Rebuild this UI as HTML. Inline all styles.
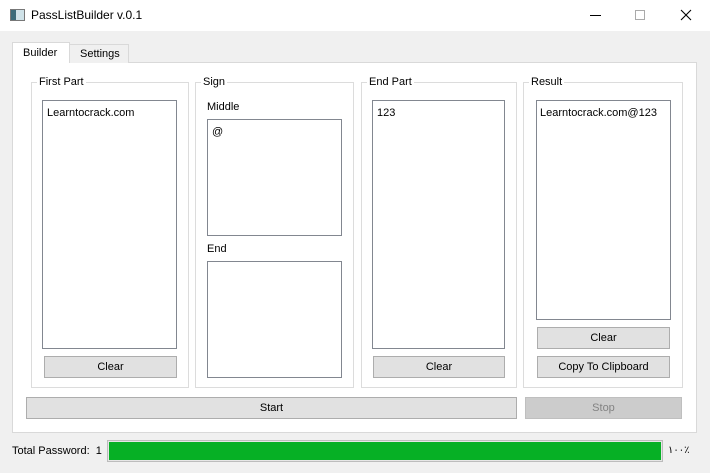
<!DOCTYPE html><html><head><style>
*{margin:0;padding:0;box-sizing:border-box}
body{width:710px;height:473px;background:#f0f0f0;font-family:"Liberation Sans",sans-serif;font-size:11px;color:#000;position:relative;overflow:hidden}
.a{position:absolute}
.box{position:absolute;background:#fff;border:1px solid #828790}
.grp{position:absolute;border:1px solid #dcdcdc}
.grp span{position:absolute;top:-7px;left:5px;background:#fff;padding:0 2px}
.btn{position:absolute;background:#e1e1e1;border:1px solid #adadad;text-align:center;line-height:20px}
</style></head><body>
<div class="a" style="left:0;top:0;width:710px;height:31px;background:#fff"></div>
<div class="a" style="left:10px;top:9px;width:15px;height:12px;border:1px solid #777;background:linear-gradient(90deg,#3b6b7a 0 40%,#cfe2e8 40%)"></div>
<div class="a" style="left:31px;top:8px;font-size:12px">PassListBuilder v.0.1</div>
<div class="a" style="left:590px;top:15px;width:11px;height:1px;background:#000"></div>
<div class="a" style="left:635px;top:10px;width:10px;height:10px;border:1px solid #aaa"></div>
<svg class="a" style="left:680px;top:9px" width="12" height="12"><path d="M1 1L11 11M11 1L1 11" stroke="#000" stroke-width="1.1"/></svg>
<div class="a" style="left:12px;top:62px;width:685px;height:371px;background:#fff;border:1px solid #d9d9d9"></div>
<div class="a" style="left:69px;top:44px;width:60px;height:19px;background:#f0f0f0;border:1px solid #d9d9d9;border-bottom:none;padding-left:10px;line-height:18px">Settings</div>
<div class="a" style="left:12px;top:42px;width:58px;height:21px;background:#fff;border:1px solid #d9d9d9;border-bottom:none;padding-left:10px;line-height:20px">Builder</div>
<div class="grp" style="left:31px;top:82px;width:158px;height:306px"><span>First Part</span></div>
<div class="grp" style="left:195px;top:82px;width:159px;height:306px"><span>Sign</span></div>
<div class="grp" style="left:361px;top:82px;width:156px;height:306px"><span>End Part</span></div>
<div class="grp" style="left:523px;top:82px;width:160px;height:306px"><span>Result</span></div>
<div class="box" style="left:42px;top:100px;width:135px;height:249px;padding:6px 4px">Learntocrack.com</div>
<div class="btn" style="left:44px;top:356px;width:133px;height:22px">Clear</div>
<div class="a" style="left:207px;top:101px">Middle</div>
<div class="box" style="left:207px;top:119px;width:135px;height:117px;padding:6px 4px">@</div>
<div class="a" style="left:207px;top:243px">End</div>
<div class="box" style="left:207px;top:261px;width:135px;height:117px"></div>
<div class="box" style="left:372px;top:100px;width:133px;height:249px;padding:6px 4px">123</div>
<div class="btn" style="left:373px;top:356px;width:132px;height:22px">Clear</div>
<div class="box" style="left:536px;top:100px;width:135px;height:220px;padding:6px 3px">Learntocrack.com@123</div>
<div class="btn" style="left:537px;top:327px;width:133px;height:22px">Clear</div>
<div class="btn" style="left:537px;top:356px;width:133px;height:22px">Copy To Clipboard</div>
<div class="btn" style="left:26px;top:397px;width:491px;height:22px">Start</div>
<div class="btn" style="left:525px;top:397px;width:157px;height:22px;background:#cccccc;border-color:#bfbfbf;color:#838383">Stop</div>
<div class="a" style="left:12px;top:445px">Total Password:&nbsp; 1</div>
<div class="a" style="left:107px;top:440px;width:556px;height:22px;border:1px solid #bcbcbc;background:#e6e6e6;padding:1px"><div style="width:100%;height:100%;background:#06b025"></div></div>
<div class="a" style="left:668px;top:445px;font-size:10px">١٠٠٪</div>
</body></html>
